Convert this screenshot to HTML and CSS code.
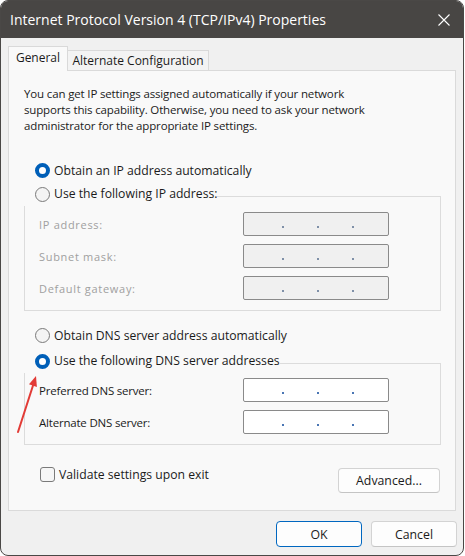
FILE: index.html
```html
<!DOCTYPE html>
<html lang="en">

<head>
  <meta charset="UTF-8" />
  <title>Internet Protocol Version 4 (TCP/IPv4) Properties</title>
  <link rel="stylesheet" href="styles.css">
</head>

<body>
  <div class="window">
    <div class="titlebar">
      <span class="title">Internet Protocol Version 4 (TCP/IPv4) Properties</span>
      <svg class="close" width="12" height="12" viewBox="0 0 12 12">
        <path d="M0.5 0.5L11.5 11.5M11.5 0.5L0.5 11.5" stroke="#ffffff" stroke-width="1.1" />
      </svg>
    </div>

    <div class="content">
      <div class="tabs">
        <div class="tab active">General</div>
        <div class="tab">Alternate Configuration</div>
      </div>

      <div class="panel">
        <p class="intro">You can get IP settings assigned automatically if your network<br>supports this capability. Otherwise, you need to ask your network<br>administrator for the appropriate IP settings.</p>

        <div class="radio-row"><span class="radio on"></span>Obtain an IP address automatically</div>
        <fieldset class="group ip-group">
          <legend><span class="radio"></span>Use the following IP address:</legend>
          <div class="field disabled"><span class="label">IP address:</span><div class="ip"><i></i><i></i><i></i></div></div>
          <div class="field disabled"><span class="label">Subnet mask:</span><div class="ip"><i></i><i></i><i></i></div></div>
          <div class="field disabled"><span class="label">Default gateway:</span><div class="ip"><i></i><i></i><i></i></div></div>
        </fieldset>

        <div class="radio-row dns-auto"><span class="radio"></span>Obtain DNS server address automatically</div>
        <fieldset class="group dns-group">
          <legend><span class="radio on"></span>Use the following DNS server addresses</legend>
          <div class="field"><span class="label">Preferred DNS server:</span><div class="ip"><i></i><i></i><i></i></div></div>
          <div class="field"><span class="label">Alternate DNS server:</span><div class="ip"><i></i><i></i><i></i></div></div>
        </fieldset>

        <div class="bottom-row">
          <div class="check"><span class="box"></span>Validate settings upon exit</div>
          <button class="btn adv">Advanced...</button>
        </div>
      </div>

      <div class="actions">
        <button class="btn primary">OK</button>
        <button class="btn">Cancel</button>
      </div>
    </div>

    <!-- red annotation arrow -->
    <svg class="arrow" width="32" height="68" viewBox="0 0 32 68">
      <line x1="6" y1="62" x2="21" y2="15.5" stroke="#e23b36" stroke-width="2" stroke-linecap="round" />
      <polygon points="24,6 24.9,16.9 17,14.3" fill="#e23b36" />
    </svg>
  </div>
</body>

</html>
```

FILE: styles.css
```css
body { margin: 0; padding: 0; background: #ffffff; font-family: 'Open Sans', 'Noto Sans', sans-serif; font-size: 11.5px; color: #1b1b1b; }
* { box-sizing: border-box; }

.window {
  position: relative;
  width: 464px;
  height: 556px;
  border: 1px solid #4a4846;
  border-radius: 8px;
  overflow: hidden;
  background: #f0f0f0;
}

.titlebar {
  height: 37px;
  background: #484644;
  display: flex;
  align-items: center;
  padding-left: 9px;
}
.title { color: #ffffff; font-size: 14px; }
.close { margin-left: auto; margin-right: 13px; }

.content { padding: 8px 7px 0 7px; }

.tabs { display: flex; align-items: flex-end; height: 24px; font-size: 12px; }
.tab {
  border: 1px solid #d9d9d9;
  border-bottom: none;
  text-align: center;
  background: #f3f3f3;
  height: 20px;
  line-height: 19px;
  width: 142px;
  margin-left: -1px;
}
.tab.active {
  position: relative;
  z-index: 1;
  width: 60px;
  height: 25px;
  line-height: 22px;
  margin-left: 0;
  margin-bottom: -1px;
  background: #f9f9f9;
}

.panel {
  height: 441px;
  background: #f9f9f9;
  border: 1px solid #dadada;
  padding: 15px 0 0 15px;
}
.intro { margin: 0; line-height: 16px; letter-spacing: -0.15px; }

.radio-row { display: flex; align-items: center; height: 16px; margin-top: 28px; font-size: 12.2px; }
.radio-row.dns-auto { margin-top: 16px; }
.radio {
  width: 15px;
  height: 15px;
  border-radius: 50%;
  border: 1px solid #7a7a7a;
  background: #f4f4f4;
  margin: 0 4px 0 11px;
  flex-shrink: 0;
}
.radio.on { border: 4.5px solid #005fb8; background: #ffffff; }

.group {
  width: 417px;
  margin: 8px 0 0 0;
  border: 1px solid #dcdcdc;
  padding: 6px 0 10px 14px;
}
.dns-group { margin-top: 10px; padding-top: 5px; }
.group legend {
  display: flex;
  align-items: center;
  height: 20px;
  padding: 0 0 4px 0;
  margin-left: -15px;
  line-height: 16px;
  font-size: 12.2px;
}

.field { display: flex; align-items: center; height: 24px; margin-bottom: 8px; }
.field:last-child { margin-bottom: 0; }
.field .label { width: 204px; letter-spacing: -0.2px; }
.field.disabled .label { color: #a0a0a0; font-size: 11px; letter-spacing: 0.7px; }

.ip {
  width: 146px;
  height: 24px;
  border: 1px solid #8a8a8a;
  border-radius: 2px;
  background: #ffffff;
  display: flex;
  justify-content: center;
  align-items: flex-end;
  gap: 33px;
  padding: 0 0 7px 4px;
}
.ip i { width: 2px; height: 2px; background: #4a76b4; }
.field.disabled .ip { background: #f0f0f0; }
.field.disabled .ip i { background: #7f90a8; }

.bottom-row {
  width: 416px;
  margin-top: 22px;
  display: flex;
  justify-content: space-between;
  align-items: flex-start;
}
.check { display: flex; align-items: center; height: 15px; margin-left: 16px; font-size: 12.2px; }
.check .box {
  width: 15px;
  height: 15px;
  border: 1px solid #7a7a7a;
  border-radius: 3px;
  background: #f6f6f6;
  margin-right: 4px;
}

.btn {
  font-family: inherit;
  font-size: 12.3px;
  color: #1b1b1b;
  background: #fdfdfd;
  border: 1px solid #d3d3d3;
  border-bottom-color: #c4c4c4;
  border-radius: 4px;
  padding: 0;
}
.adv { width: 102px; height: 25px; margin-top: 1px; }

.actions { display: flex; justify-content: flex-end; gap: 9px; margin: 10px -1px 0 0; }
.actions .btn { width: 86px; height: 26px; }
.btn.primary { border-color: #0067c0; }

.arrow { position: absolute; left: 11px; top: 369px; }
```
